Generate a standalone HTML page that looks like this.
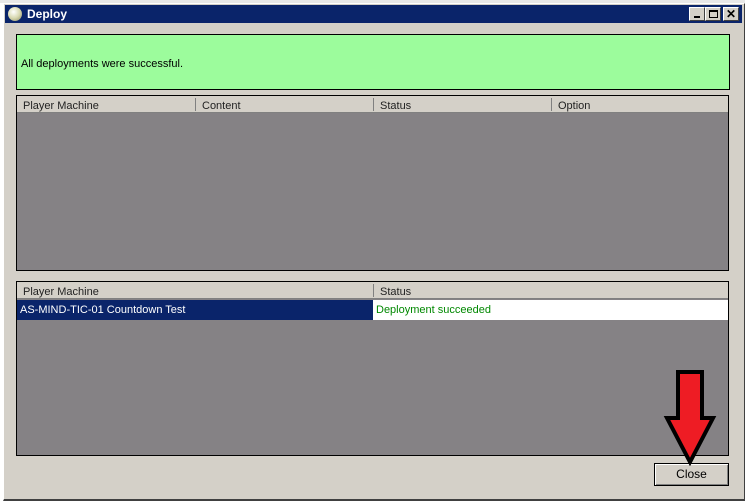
<!DOCTYPE html>
<html><head><style>
*{margin:0;padding:0;box-sizing:border-box}
body{width:745px;height:503px;background:#fff;position:relative;overflow:hidden;font-family:"Liberation Sans",sans-serif;font-size:11px;color:#000}
.a{position:absolute}
.win{left:3px;top:3px;width:742px;height:498px;background:#d4d0c8;border-left:1px solid #fff;border-top:1px solid #fff;border-right:1px solid #404040;border-bottom:2px solid #404040}
.title{left:5px;top:5px;width:737px;height:18px;background:#0a246a;color:#fff;font-weight:bold;font-size:12px;line-height:18px;padding-left:22px}
.tb{top:7px;width:16px;height:14px;background:#d4d0c8;border:1px solid;border-color:#fff #404040 #404040 #fff}
.lv{background:#858285;border:1px solid #000;left:16px;width:713px}
.hdr{position:absolute;left:0;top:0;right:0;height:17px;background:#d4d0c8;border-bottom:1px solid #808080}
.hdr span{position:absolute;top:2px;padding-left:6px;border-left:1px solid #808080;height:13px;line-height:16px;color:#222}
</style></head><body>
<div class="a" style="left:0;top:0;width:745px;height:3px;background:#e8e8e8"></div>
<div class="a win"></div>
<div class="a title">Deploy</div>
<div class="a" style="left:8px;top:7px;width:14px;height:14px;border-radius:50%;background:radial-gradient(circle at 40% 35%,#fff,#d8d8b0 50%,#8a8a60)"></div>
<div class="a tb" style="left:689px"><div class="a" style="left:4px;top:8px;width:6px;height:2px;background:#000"></div></div>
<div class="a tb" style="left:705px"><div class="a" style="left:3px;top:2px;width:9px;height:8px;border:1px solid #000;border-top-width:2px"></div></div>
<div class="a tb" style="left:723px;font-size:12px;font-weight:bold;line-height:12px;text-align:center">✕</div>
<div class="a" style="left:16px;top:34px;width:714px;height:56px;background:#9cfc9c;border:1px solid #000;padding:23px 0 0 4px">All deployments were successful.</div>
<div class="a lv" style="top:95px;height:176px">
 <div class="hdr"><span style="left:0;border:0">Player Machine</span><span style="left:178px">Content</span><span style="left:356px">Status</span><span style="left:534px">Option</span></div>
</div>
<div class="a lv" style="top:281px;height:175px">
 <div class="hdr"><span style="left:0;border:0">Player Machine</span><span style="left:356px">Status</span></div>
 <div class="a" style="left:0;top:18px;width:356px;height:20px;background:#0a246a;color:#fff;line-height:20px;padding-left:3px">AS-MIND-TIC-01 Countdown Test</div>
 <div class="a" style="left:356px;top:18px;width:355px;height:20px;background:#fff;color:#080;line-height:20px;padding-left:3px">Deployment succeeded</div>
</div>
<div class="a" style="left:654px;top:463px;width:75px;height:23px;border:1px solid #000;background:#d4d0c8;box-shadow:inset 1px 1px #fff,inset -1px -1px #808080;text-align:center;line-height:21px;font-size:12px">Close</div>
<svg class="a" style="left:660px;top:368px" width="60" height="98"><path d="M18 4H42V50H53L30 94L7 50H18Z" fill="#ee1c24" stroke="#000" stroke-width="4" stroke-linejoin="miter"/></svg>
</body></html>
